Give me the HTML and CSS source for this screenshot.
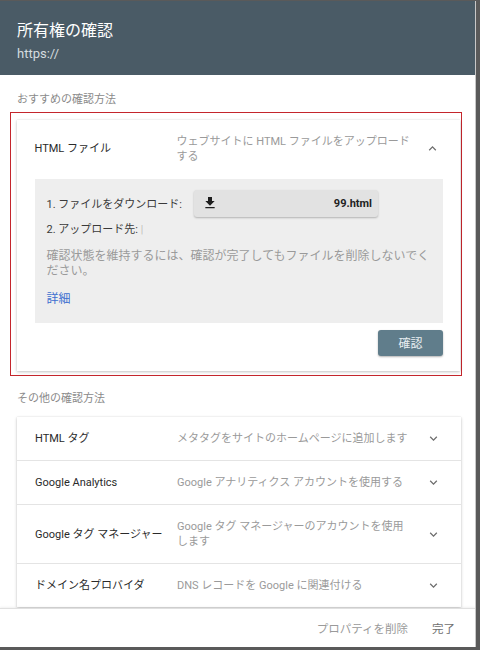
FILE: index.html
```html
<!DOCTYPE html>
<html lang="ja">
<head>
<meta charset="utf-8">
<link rel="stylesheet" href="styles.css">
</head>
<body>
<div class="dialog">
  <header class="head">
    <div class="title">所有権の確認</div>
    <div class="url">https://</div>
  </header>
  <main class="content">
    <div class="section-label first">おすすめの確認方法</div>
    <div class="highlight">
      <div class="card">
        <div class="row open">
          <div class="label">HTML ファイル</div>
          <div class="desc">ウェブサイトに HTML ファイルをアップロードする</div>
          <svg class="chev" viewBox="0 0 24 24"><path d="M7.41 15.41 12 10.83l4.59 4.58L18 14l-6-6-6 6z"/></svg>
        </div>
        <div class="panel">
          <div class="step1">
            <span>1. ファイルをダウンロード:</span>
            <div class="dl">
              <svg class="dl-icon" viewBox="0 0 24 24"><path d="M19 9h-4V3H9v6H5l7 7 7-7zM5 18v2h14v-2H5z"/></svg>
              <span class="fname">99.html</span>
            </div>
          </div>
          <div class="step2">2. アップロード先: <span class="bar">|</span></div>
          <p class="note">確認状態を維持するには、確認が完了してもファイルを削除しないでください。</p>
          <a class="link">詳細</a>
        </div>
        <div class="actions">
          <button class="confirm">確認</button>
        </div>
      </div>
    </div>
    <div class="section-label">その他の確認方法</div>
    <div class="card">
      <div class="row">
        <div class="label">HTML タグ</div>
        <div class="desc">メタタグをサイトのホームページに追加します</div>
        <svg class="chev" viewBox="0 0 24 24"><path d="M16.59 8.59 12 13.17 7.41 8.59 6 10l6 6 6-6z"/></svg>
      </div>
      <div class="row">
        <div class="label">Google Analytics</div>
        <div class="desc">Google アナリティクス アカウントを使用する</div>
        <svg class="chev" viewBox="0 0 24 24"><path d="M16.59 8.59 12 13.17 7.41 8.59 6 10l6 6 6-6z"/></svg>
      </div>
      <div class="row">
        <div class="label">Google タグ マネージャー</div>
        <div class="desc">Google タグ マネージャーのアカウントを使用します</div>
        <svg class="chev" viewBox="0 0 24 24"><path d="M16.59 8.59 12 13.17 7.41 8.59 6 10l6 6 6-6z"/></svg>
      </div>
      <div class="row">
        <div class="label">ドメイン名プロバイダ</div>
        <div class="desc">DNS レコードを Google に関連付ける</div>
        <svg class="chev" viewBox="0 0 24 24"><path d="M16.59 8.59 12 13.17 7.41 8.59 6 10l6 6 6-6z"/></svg>
      </div>
    </div>
  </main>
  <footer class="foot">
    <button class="fbtn del">プロパティを削除</button>
    <button class="fbtn done">完了</button>
  </footer>
</div>
</body>
</html>
```
FILE: styles.css
```css
* { box-sizing: border-box; }
html, body { margin: 0; padding: 0; }
body {
  background: #5a5a5a;
  width: 480px;
  height: 650px;
  overflow: hidden;
  font-family: "Roboto", "Noto Sans CJK JP", sans-serif;
}
.dialog {
  margin-top: 1px;
  width: 476px;
  height: 646px;
  background: #fff;
  border-right: 1px solid #c8c8c8;
  display: flex;
  flex-direction: column;
  overflow: hidden;
}
.head {
  background: #4a5b66;
  height: 74px;
  padding: 19px 17px 0;
  flex: none;
}
.title {
  color: #fff;
  font-size: 16px;
  line-height: 22px;
}
.url {
  color: #d5dbdf;
  font-size: 13px;
  line-height: 18px;
  margin-top: 3px;
}
.content {
  flex: 1;
  overflow: hidden;
  padding: 0 14px 0 17px;
}
.section-label {
  color: #8a8a8a;
  font-size: 11px;
  line-height: 16px;
  margin-top: 15px;
  margin-bottom: 10px;
}
.section-label.first {
  margin-top: 17px;
  margin-bottom: 4px;
}
.highlight {
  margin-left: -7px;
  margin-right: -1px;
  border: 1.5px solid #c4262c;
  padding: 6.5px 1px 4.5px 5.5px;
}
.card {
  background: #fff;
  box-shadow: 0 1px 3px rgba(0,0,0,0.22), 0 0 1px rgba(0,0,0,0.12);
}
.row {
  display: flex;
  align-items: center;
  padding: 14px 20px 14px 18px;
  border-top: 1px solid #e4e4e4;
  font-size: 11px;
  line-height: 15px;
}
.row:first-child { border-top: none; }
.row.open { padding-top: 14px; padding-bottom: 15px; }
.label {
  width: 142px;
  flex: none;
  color: #2a2a2a;
}
.desc {
  flex: 1;
  color: #9a9a9a;
  padding-right: 12px;
}
.chev {
  width: 15px;
  height: 15px;
  fill: #6e6e6e;
  flex: none;
}
.panel {
  background: #eeeeee;
  margin: 0 17px 0 18px;
  padding: 11px 10px 16px 12px;
  color: #3a3a3a;
  font-size: 11px;
}
.step1 {
  display: flex;
  align-items: center;
  height: 27px;
}
.dl {
  margin-left: 12px;
  width: 184px;
  height: 27px;
  background: #e2e2e2;
  border-radius: 3px;
  box-shadow: 0 1px 2px rgba(0,0,0,0.25);
  display: flex;
  align-items: center;
  justify-content: space-between;
  padding: 0 6px 0 8px;
}
.dl-icon { width: 16px; height: 16px; fill: #1e1e1e; }
.fname {
  font-weight: 700;
  font-size: 11px;
  color: #222;
}
.step2 {
  margin-top: 5px;
  line-height: 16px;
}
.bar { color: #aaa; font-weight: 300; }
.note {
  margin: 11px 0 0;
  font-size: 12px;
  line-height: 15px;
  color: #9a9a9a;
}
.link {
  display: block;
  margin-top: 12px;
  line-height: 16px;
  font-size: 12px;
  color: #3c6fd0;
}
.actions {
  display: flex;
  justify-content: flex-end;
  padding: 7px 17px 15px;
}
.confirm {
  width: 65px;
  height: 26px;
  border: none;
  border-radius: 3px;
  background: #607d8b;
  color: #e8eef1;
  font-family: inherit;
  font-size: 12px;
  box-shadow: 0 1px 2px rgba(0,0,0,0.3);
  padding: 0;
}
.foot {
  flex: none;
  height: 39px;
  border-top: 1px solid #e0e0e0;
  box-shadow: 0 -1px 2px rgba(0,0,0,0.06);
  display: flex;
  align-items: center;
  justify-content: flex-end;
  padding-right: 20px;
  gap: 24px;
  background: #fff;
}
.fbtn {
  border: none;
  background: none;
  padding: 0;
  font-family: inherit;
  font-size: 11.5px;
}
.del { color: #9a9a9a; }
.done { color: #707070; }
```
